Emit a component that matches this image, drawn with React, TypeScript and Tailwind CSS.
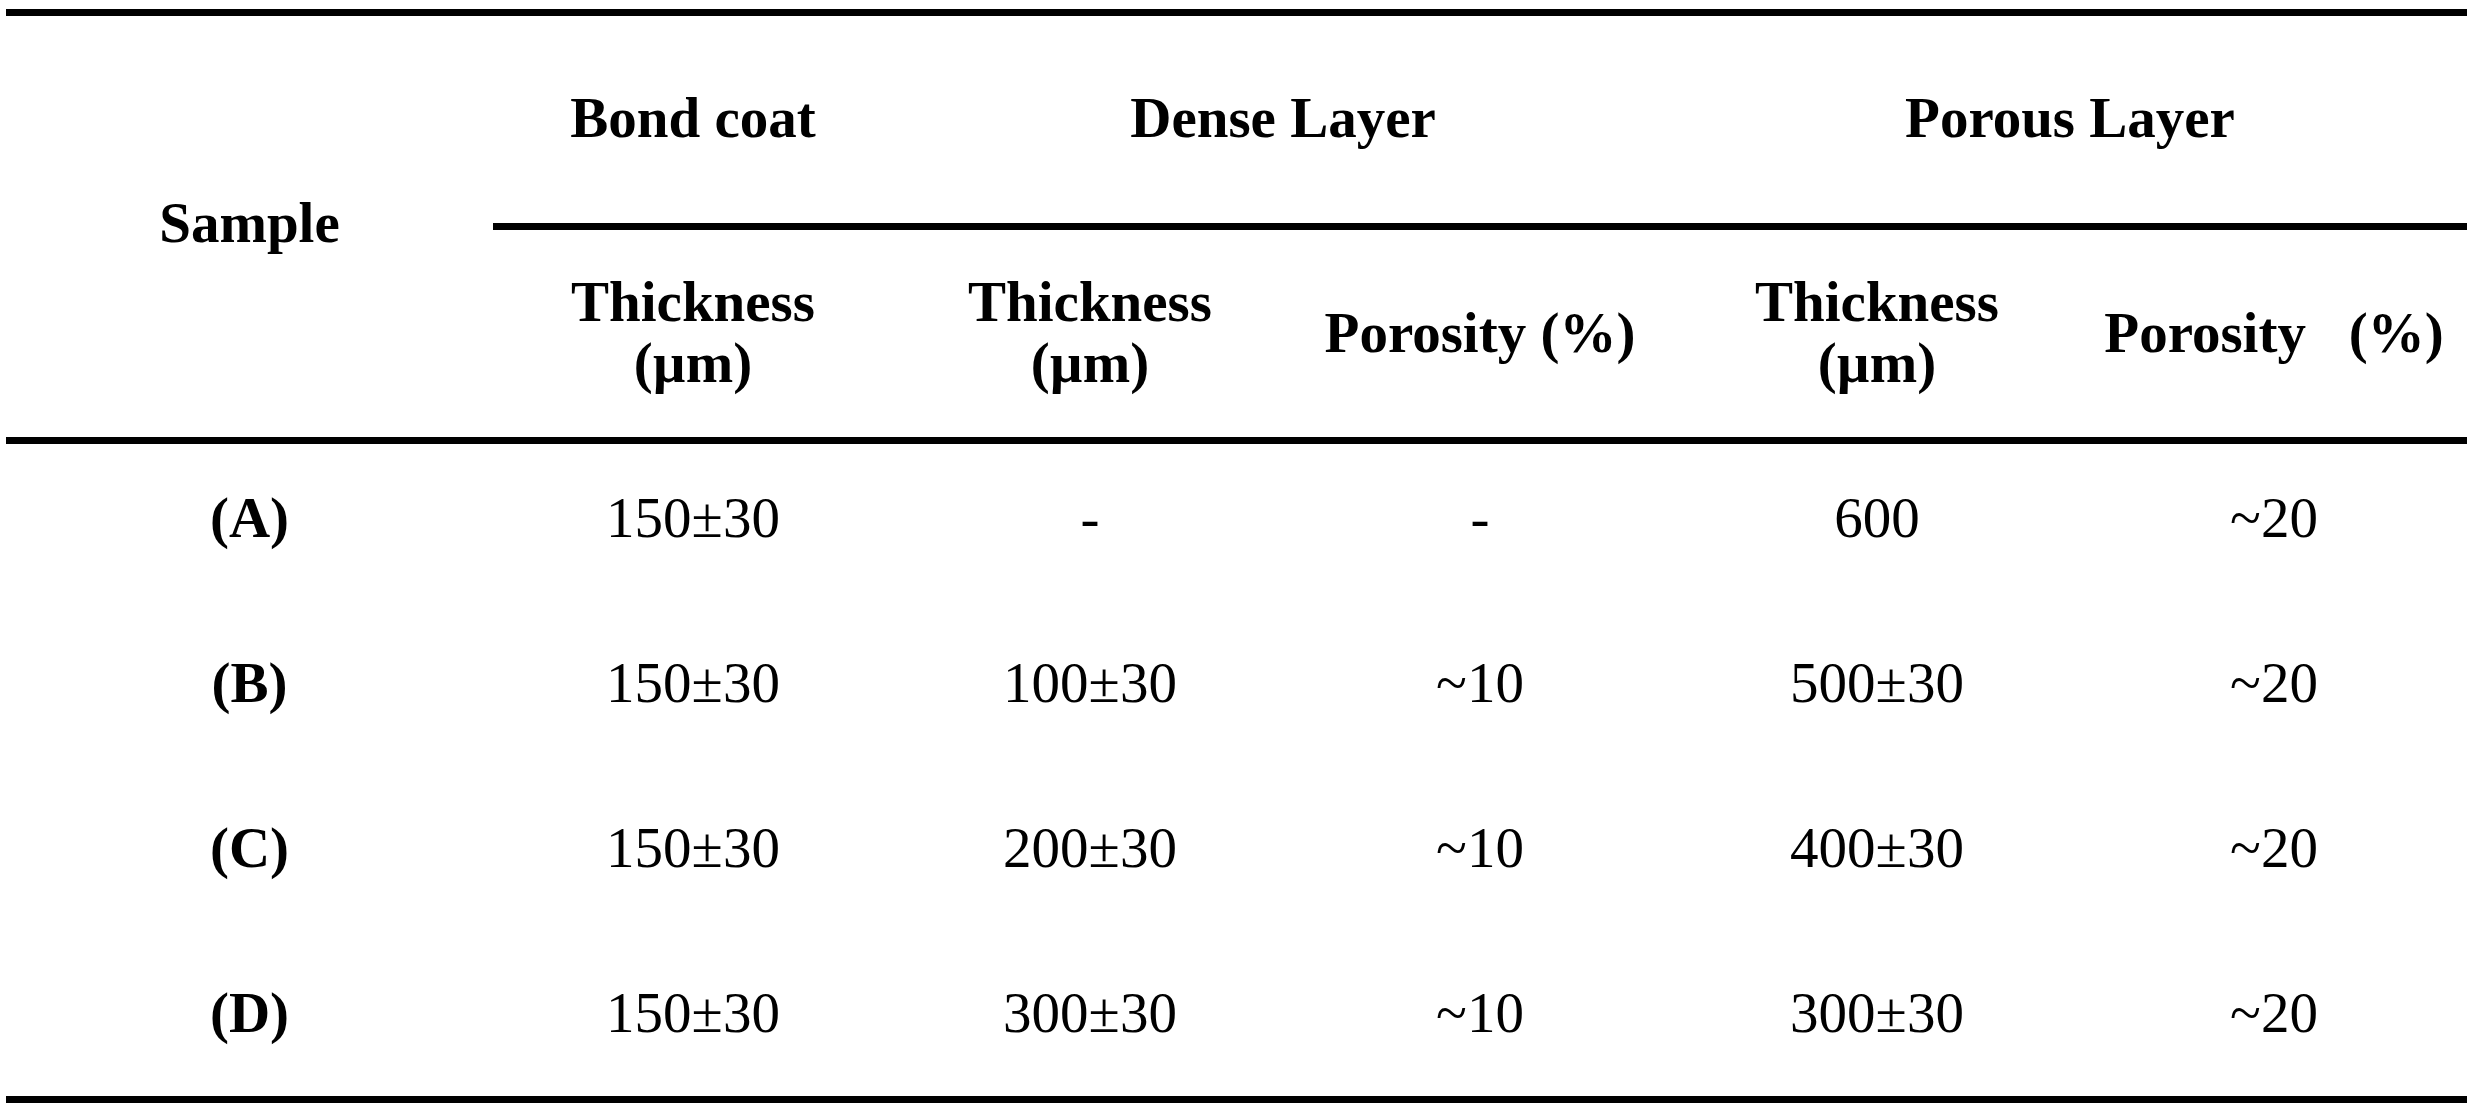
import React from 'react';

interface SampleRow {
    label: string;
    bondThickness: string;
    denseThickness: string;
    densePorosity: string;
    porousThickness: string;
    porousPorosity: string;
}

const rows: SampleRow[] = [
    { label: '(A)', bondThickness: '150±30', denseThickness: '-', densePorosity: '-', porousThickness: '600', porousPorosity: '~20' },
    { label: '(B)', bondThickness: '150±30', denseThickness: '100±30', densePorosity: '~10', porousThickness: '500±30', porousPorosity: '~20' },
    { label: '(C)', bondThickness: '150±30', denseThickness: '200±30', densePorosity: '~10', porousThickness: '400±30', porousPorosity: '~20' },
    { label: '(D)', bondThickness: '150±30', denseThickness: '300±30', densePorosity: '~10', porousThickness: '300±30', porousPorosity: '~20' },
];

const ThicknessHeader: React.FC = () => (
    <div className="flex items-center justify-center pb-[4px] text-center leading-[61px]">
        <div>
            Thickness
            <br />
            (µm)
        </div>
    </div>
);

const App: React.FC = () => {
    return (
        <div className="min-h-screen bg-white pt-[9px] pl-[6px]">
            <div className="w-[2461px] border-y-[7px] border-black font-['Liberation_Serif',serif] text-[57px] leading-[57px] text-black">
                {/* header */}
                <div className="flex border-b-[7px] border-black font-bold">
                    <div className="flex w-[487px] items-center justify-center pb-[9px]">Sample</div>
                    <div className="flex flex-1 flex-col">
                        <div className="grid h-[214px] grid-cols-[400px_780px_794px] border-b-[7px] border-black pb-[4px]">
                            <div className="flex items-center justify-center">Bond coat</div>
                            <div className="flex items-center justify-center">Dense Layer</div>
                            <div className="flex items-center justify-center">Porous Layer</div>
                        </div>
                        <div className="grid h-[207px] grid-cols-[400px_394px_386px_408px_386px]">
                            <ThicknessHeader />
                            <ThicknessHeader />
                            <div className="flex items-center justify-center pb-[3px]">Porosity (%)</div>
                            <ThicknessHeader />
                            <div className="flex items-center justify-center whitespace-pre pb-[3px]">Porosity   (%)</div>
                        </div>
                    </div>
                </div>

                {/* body */}
                <div className="flex flex-col">
                    {rows.map((row) => (
                        <div
                            key={row.label}
                            className="grid h-[165px] grid-cols-[487px_400px_394px_386px_408px_386px] items-center pb-[19px] text-center last:h-[157px] last:pb-[11px]"
                        >
                            <div className="font-bold">{row.label}</div>
                            <div>{row.bondThickness}</div>
                            <div>{row.denseThickness}</div>
                            <div>{row.densePorosity}</div>
                            <div>{row.porousThickness}</div>
                            <div>{row.porousPorosity}</div>
                        </div>
                    ))}
                </div>
            </div>
        </div>
    );
};

export default App;
